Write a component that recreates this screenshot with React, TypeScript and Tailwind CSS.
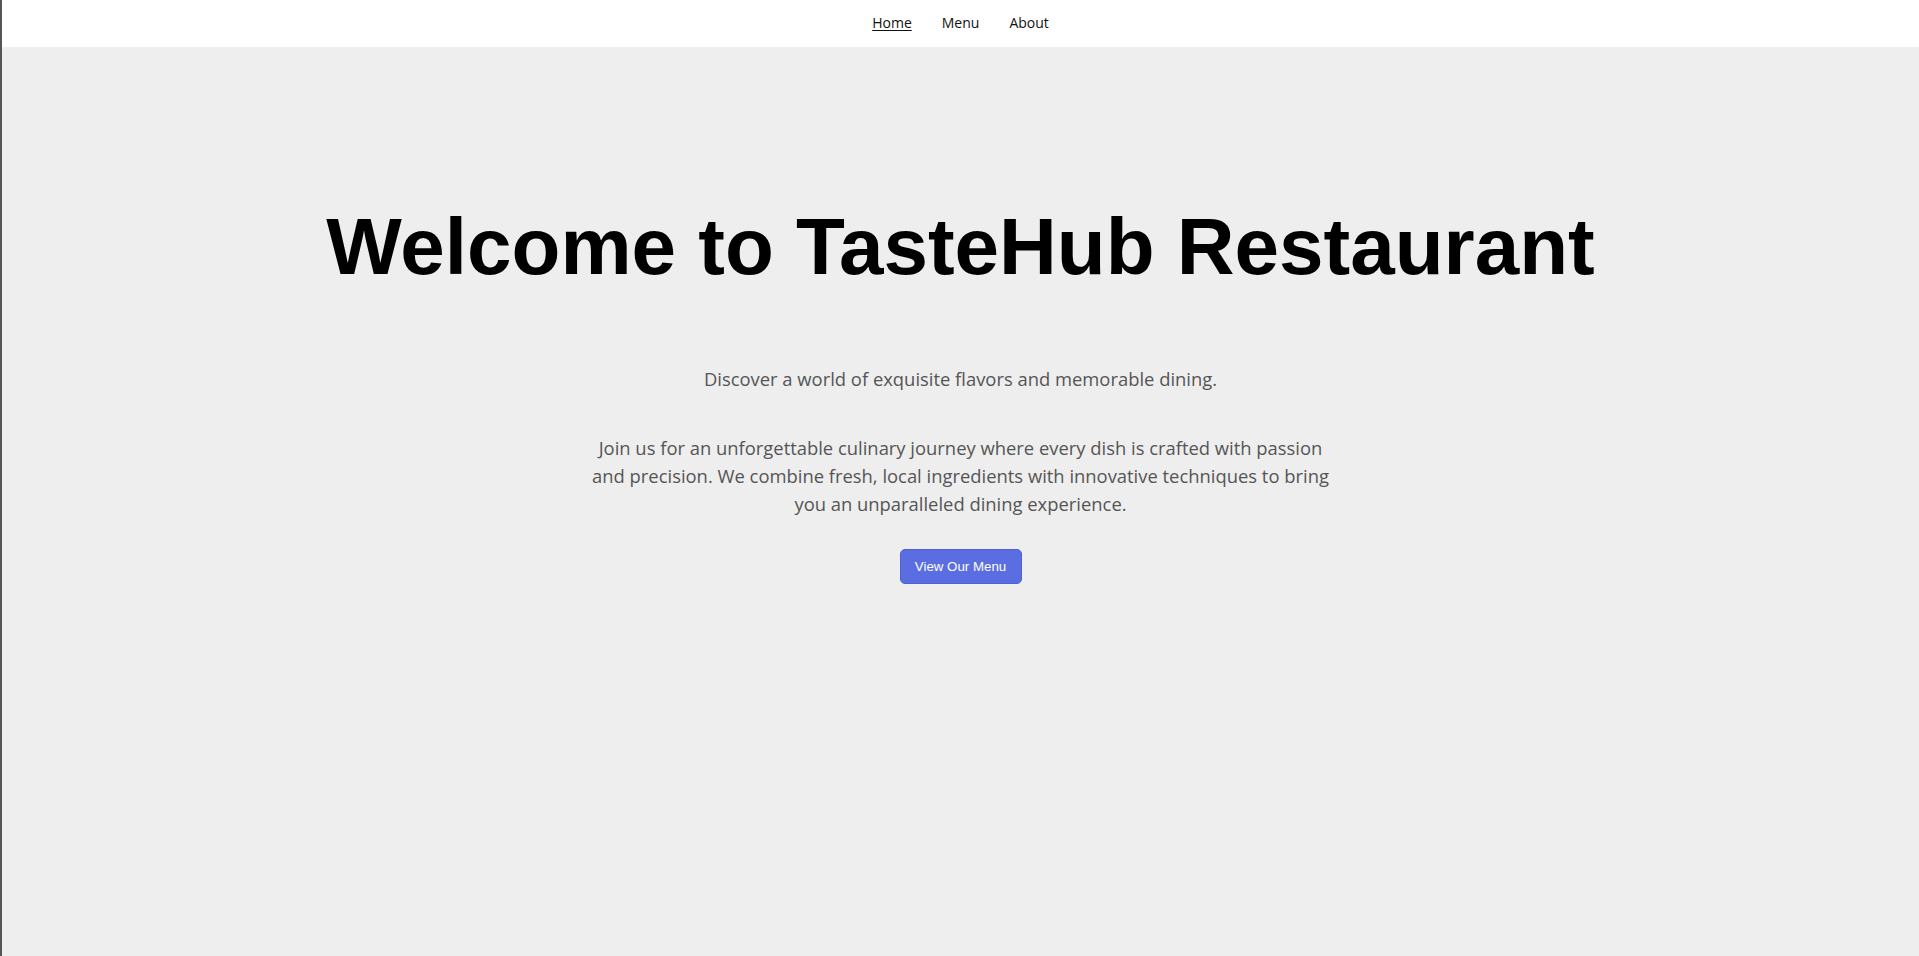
export default function App() {
  return (
    <div className="min-h-screen w-full bg-[#eeeeee] border-l-2 border-[#555] font-['Open_Sans',sans-serif]">
      {/* Nav */}
      <nav className="flex h-[47px] items-center justify-center gap-[30px] bg-white pb-[2px] text-[14px] text-[#111]">
        <a href="#" className="underline underline-offset-2">Home</a>
        <a href="#">Menu</a>
        <a href="#">About</a>
      </nav>

      {/* Hero */}
      <section className="flex flex-col items-center px-6 pt-[154px] text-center">
        <h1 className="font-['Liberation_Sans',Arial,sans-serif] text-[80px] font-bold leading-[92px] text-black">
          Welcome to TasteHub Restaurant
        </h1>
        <p className="mt-[72px] text-[18.4px] leading-[28px] text-[#555]">
          Discover a world of exquisite flavors and memorable dining.
        </p>
        <p className="mt-[41px] max-w-[750px] text-[18.4px] leading-[28px] text-[#555]">
          Join us for an unforgettable culinary journey where every dish is crafted with passion
          and precision. We combine fresh, local ingredients with innovative techniques to bring
          you an unparalleled dining experience.
        </p>
        <button className="mt-[31px] h-[35px] w-[122px] rounded-[5px] border border-[#4f5fd6] bg-[#5b6ee1] font-['Liberation_Sans',Arial,sans-serif] text-[13.3px] text-white">
          View Our Menu
        </button>
      </section>
    </div>
  );
}
